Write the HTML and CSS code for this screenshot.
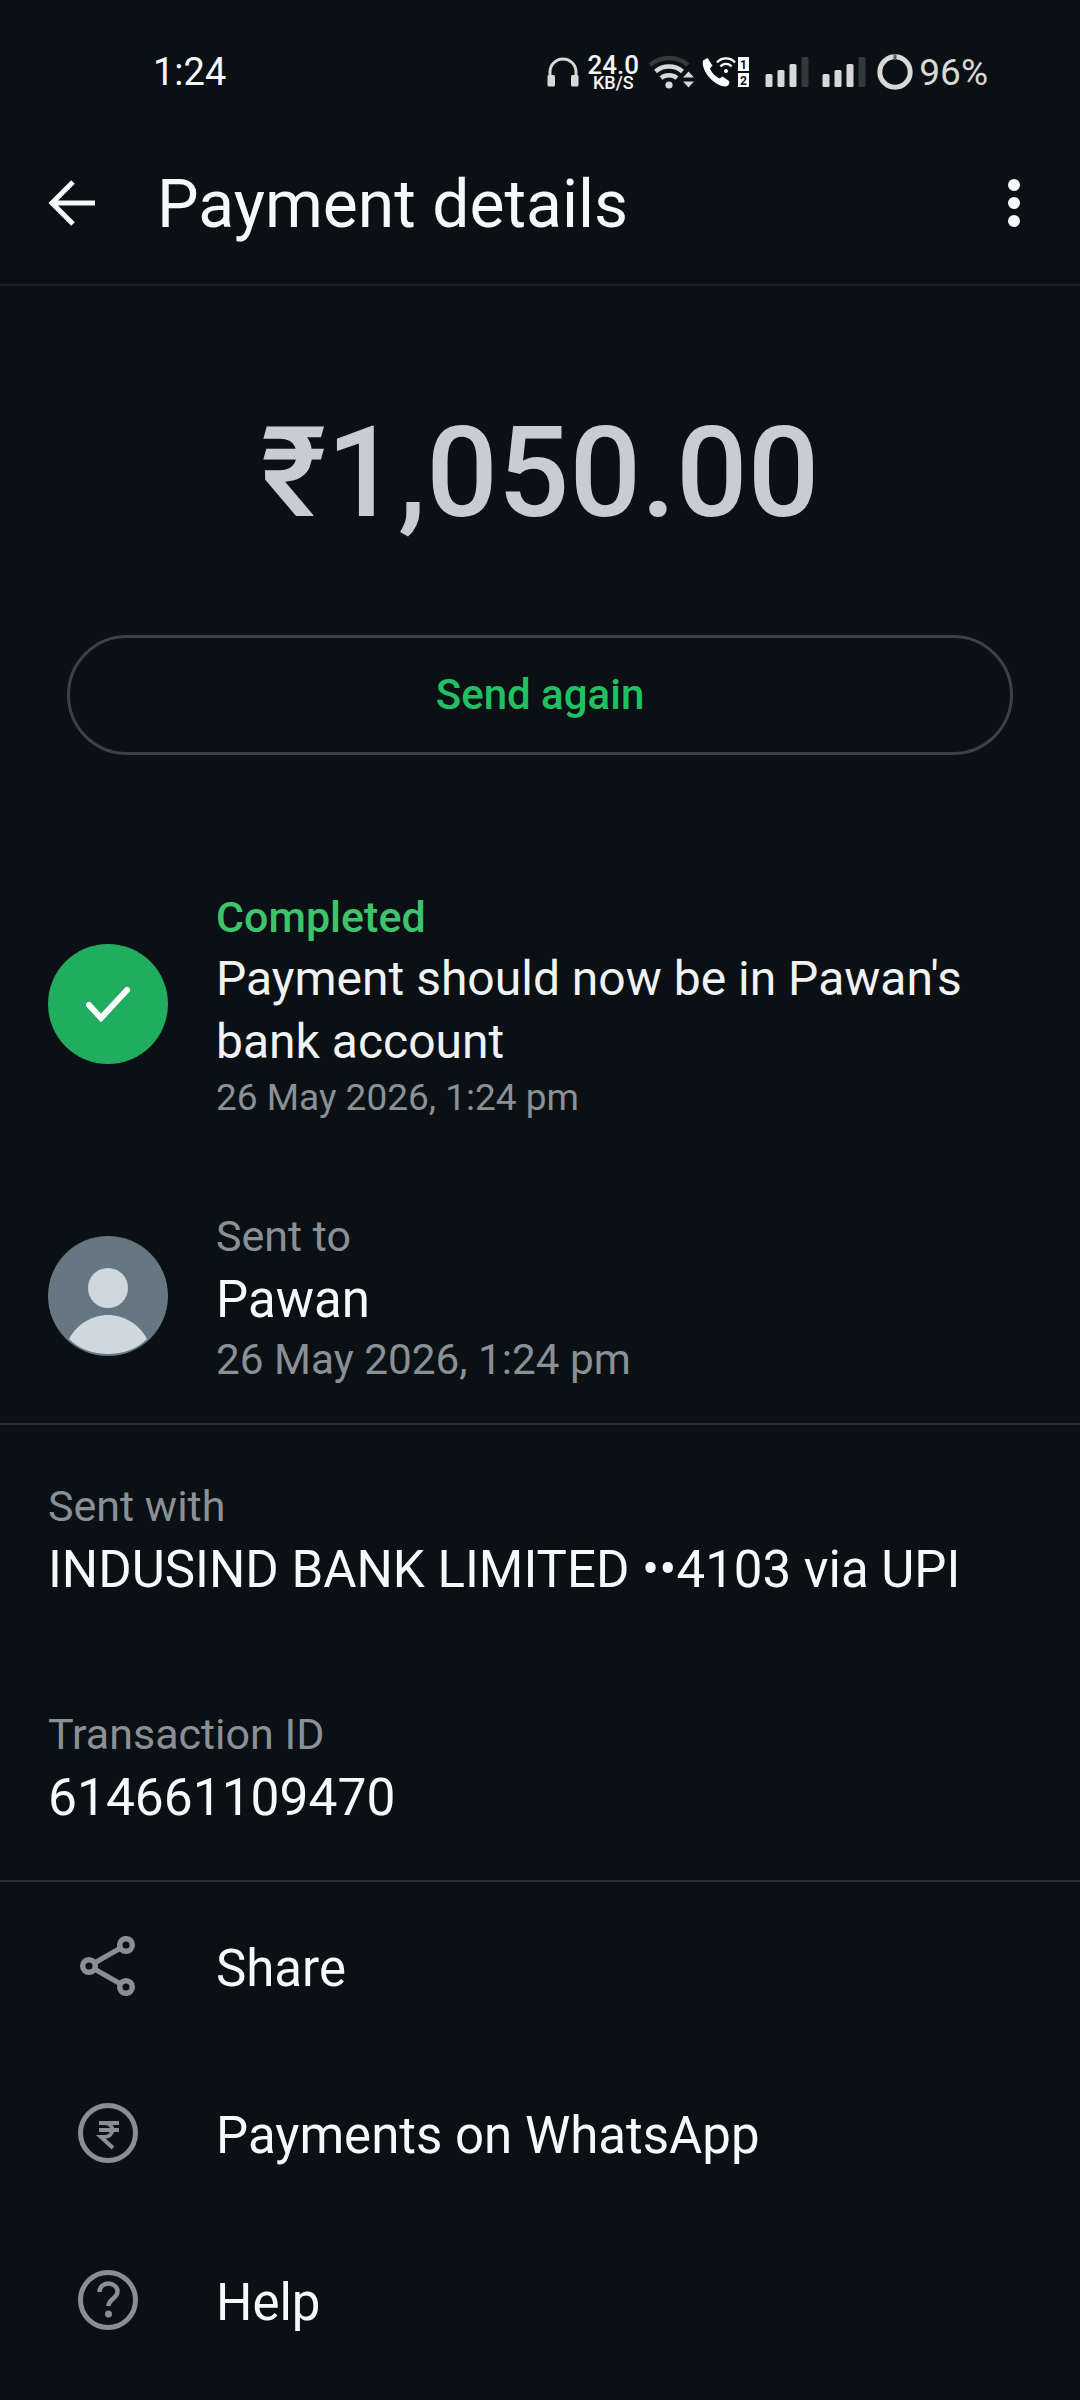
FILE: index.html
```html
<!DOCTYPE html>
<html lang="en">
<head>
  <meta charset="UTF-8">
  <meta name="viewport" content="width=device-width, initial-scale=1.0">
  <title>Payment details</title>
  <link rel="stylesheet" href="styles.css">
</head>
<body>
  <div class="status-bar">
    <span class="clock">1:24</span>
    <div class="status-icons">
      <svg class="ic-headphones" width="32" height="30" viewBox="0 0 32 30"><path d="M3 22V15a13 13 0 0 1 26 0v7" fill="none" stroke="#d8d8d8" stroke-width="3"/><rect x="0.500" y="18" width="7.500" height="11.500" rx="1.500" fill="#d8d8d8"/><rect x="24" y="18" width="7.500" height="11.500" rx="1.500" fill="#d8d8d8"/></svg>
      <div class="net-speed"><span class="net-value">24.0</span><span class="net-unit">KB/S</span></div>
      <svg class="ic-wifi" width="46" height="36" viewBox="0 0 46 36">
        <path d="M2 11a29 29 0 0 1 38 0" fill="none" stroke="#33383b" stroke-width="4.500"/>
        <path d="M7.500 17.500a21 21 0 0 1 27 0" fill="none" stroke="#d8d8d8" stroke-width="4.500"/>
        <path d="M13 24a13 13 0 0 1 16 0" fill="none" stroke="#d8d8d8" stroke-width="4.500"/>
        <circle cx="21" cy="31" r="3.600" fill="#d8d8d8"/>
        <path d="M35 23.500l5.500-6 5.500 6zM35 27.500h11l-5.500 6z" fill="#d8d8d8"/>
      </svg>
      <svg class="ic-call" width="50" height="32" viewBox="0 0 50 32">
        <path d="M3 4.500l4.500-2.500 5 7.500-2.500 3c1 3 5 8 9.500 10l3-2 6.500 4.500c1 1.500 0 5-3.500 5.500C14 30 1 15 3 4.500z" fill="#fff"/>
        <path d="M17 6.500a12 12 0 0 1 18 0M20.500 10.500a7 7 0 0 1 11 0" fill="none" stroke="#fff" stroke-width="2.200"/>
        <circle cx="26" cy="15" r="2" fill="#fff"/>
        <rect x="38" y="1" width="11" height="14" fill="#fff"/>
        <rect x="38" y="17" width="11" height="14" fill="#fff"/>
        <text x="43.500" y="12.500" class="sim-num">1</text>
        <text x="43.500" y="28.500" class="sim-num">2</text>
      </svg>
      <svg class="ic-signal" width="44" height="32" viewBox="0 0 44 32"><rect x="0.500" y="18" width="7" height="13" rx="1.500" fill="#d8d8d8"/><rect x="12.500" y="14" width="7" height="17" rx="1.500" fill="#d8d8d8"/><rect x="24.500" y="8" width="7" height="23" rx="1.500" fill="#d8d8d8"/><rect x="36.500" y="1" width="7" height="30" rx="1.500" fill="#33383b"/></svg>
      <svg class="ic-signal" width="44" height="32" viewBox="0 0 44 32"><rect x="0.500" y="18" width="7" height="13" rx="1.500" fill="#d8d8d8"/><rect x="12.500" y="14" width="7" height="17" rx="1.500" fill="#d8d8d8"/><rect x="24.500" y="8" width="7" height="23" rx="1.500" fill="#d8d8d8"/><rect x="36.500" y="1" width="7" height="30" rx="1.500" fill="#33383b"/></svg>
      <svg class="ic-battery" width="36" height="36" viewBox="0 0 36 36"><circle cx="18" cy="18" r="15.200" fill="none" stroke="#d8d8d8" stroke-width="5"/><path d="M16.500 0.500h3v5h-3z" fill="#5c6164"/></svg>
      <span class="battery-text">96%</span>
    </div>
  </div>

  <div class="app-header">
    <svg class="back-icon" width="48" height="48" viewBox="0 0 48 48"><path d="M47 23H4M25 2L4 23l21 21" fill="none" stroke="#f7f8fa" stroke-width="5"/></svg>
    <h1 class="page-title">Payment details</h1>
    <div class="more-menu"><span></span><span></span><span></span></div>
  </div>

  <div class="amount-section">
    <div class="amount">₹1,050.00</div>
    <div class="send-again">Send again</div>
  </div>

  <div class="info-row info-status">
    <div class="round-icon round-green">
      <svg width="48" height="36" viewBox="0 0 48 36"><path d="M5 19l12 13L43 4" fill="none" stroke="#fff" stroke-width="6" stroke-linecap="round"/></svg>
    </div>
    <div class="info-text">
      <div class="status-label">Completed</div>
      <div class="status-line">Payment should now be in Pawan's bank account</div>
      <div class="small-date">26 May 2026, 1:24 pm</div>
    </div>
  </div>

  <div class="info-row info-sent">
    <div class="round-icon round-avatar">
      <svg width="120" height="120" viewBox="0 0 120 120"><circle cx="60" cy="52" r="20" fill="#cfd8de"/><path d="M21 103c8-15 23-24 39-24s31 9 39 24c-10 10-24 15-39 15s-29-5-39-15z" fill="#cfd8de"/></svg>
    </div>
    <div class="info-text">
      <div class="muted-label">Sent to</div>
      <div class="main-line">Pawan</div>
      <div class="muted-date">26 May 2026, 1:24 pm</div>
    </div>
  </div>

  <div class="details">
    <div class="detail-block">
      <div class="muted-label">Sent with</div>
      <div class="main-line">INDUSIND BANK LIMITED ••4103 via UPI</div>
    </div>
    <div class="detail-block">
      <div class="muted-label">Transaction ID</div>
      <div class="main-line txn-id">614661109470</div>
    </div>
  </div>

  <div class="actions">
    <div class="action-row">
      <div class="action-icon">
        <svg width="60" height="60" viewBox="0 0 60 60"><path d="M48 9L11 30l37 21" fill="none" stroke="#899094" stroke-width="5"/><circle cx="48" cy="9" r="6.300" fill="#0b1014" stroke="#899094" stroke-width="5.500"/><circle cx="11" cy="30" r="6.300" fill="#0b1014" stroke="#899094" stroke-width="5.500"/><circle cx="48" cy="51" r="6.300" fill="#0b1014" stroke="#899094" stroke-width="5.500"/></svg>
      </div>
      <span class="action-label">Share</span>
    </div>
    <div class="action-row">
      <div class="action-icon">
        <svg width="60" height="60" viewBox="0 0 60 60"><circle cx="30" cy="30" r="27.500" fill="none" stroke="#899094" stroke-width="5"/><path d="M21 20h20M21 27h20M26 20c11 0 11 14 0 14h-3l12 11" fill="none" stroke="#899094" stroke-width="4"/></svg>
      </div>
      <span class="action-label">Payments on WhatsApp</span>
    </div>
    <div class="action-row">
      <div class="action-icon">
        <svg width="60" height="60" viewBox="0 0 60 60"><circle cx="30" cy="30" r="27.500" fill="none" stroke="#899094" stroke-width="5"/><path d="M21.500 22c0-5 4-8.500 9-8.500s9 3.500 9 8c0 7-9 7.500-9 14.500" fill="none" stroke="#899094" stroke-width="4.500"/><circle cx="30.500" cy="44" r="3.500" fill="#899094"/></svg>
      </div>
      <span class="action-label">Help</span>
    </div>
  </div>
</body>
</html>
```

FILE: styles.css
```css
* {
  box-sizing: border-box;
}

body {
  margin: 0;
  background-color: #0b1014;
  color: #f7f8fa;
  font-family: Roboto, "Liberation Sans", sans-serif;
}

/* Status bar */
.status-bar {
  display: flex;
  align-items: center;
  justify-content: space-between;
  height: 144px;
  padding: 0 92px 0 153px;
}

.clock {
  font-size: 38px;
  color: #f7f8fa;
}

.status-icons {
  display: flex;
  align-items: center;
}

.ic-headphones {
  margin-right: 8px;
}

.net-speed {
  display: flex;
  flex-direction: column;
  align-items: center;
  width: 52px;
  margin-right: 9px;
  color: #f4f4f4;
  font-weight: 500;
}

.net-value {
  font-size: 26px;
  line-height: 20px;
}

.net-unit {
  font-size: 18px;
  line-height: 15px;
}

.ic-wifi {
  margin-right: 6px;
}

.ic-call {
  margin-right: 15px;
}

.sim-num {
  font-family: Roboto, sans-serif;
  font-size: 12px;
  font-weight: 700;
  text-anchor: middle;
  fill: #0b1014;
}

.ic-signal {
  margin-right: 13px;
}

.ic-battery {
  margin-left: -2px;
  margin-right: 6px;
}

.battery-text {
  font-size: 37px;
  color: #d8d8d8;
}

/* Header */
.app-header {
  display: flex;
  align-items: center;
  height: 142px;
  padding: 0 48px 20px;
  border-bottom: 2px solid #1c2125;
}

.back-icon {
  flex-shrink: 0;
  margin-right: 61px;
}

.page-title {
  flex: 1;
  margin: 0;
  font-size: 66px;
  font-weight: 400;
}

.more-menu {
  display: flex;
  flex-direction: column;
  gap: 6px;
  margin-right: 12px;
  margin-bottom: 3px;
}

.more-menu span {
  width: 12px;
  height: 12px;
  border-radius: 50%;
  background-color: #f7f8fa;
}

/* Amount */
.amount-section {
  padding: 0 67px;
}

.amount {
  margin-top: 117px;
  font-size: 126px;
  line-height: 140px;
  font-weight: 500;
  text-align: center;
  color: #c9ccd0;
}

.send-again {
  height: 120px;
  margin-top: 92px;
  border: 3px solid #3b4145;
  border-radius: 60px;
  font-size: 42px;
  font-weight: 500;
  line-height: 113px;
  text-align: center;
  color: #21c063;
}

/* Info rows */
.info-row {
  display: flex;
  align-items: center;
  padding: 0 48px;
}

.info-status {
  margin-top: 131px;
}

.info-sent {
  margin-top: 82px;
}

.round-icon {
  display: flex;
  align-items: center;
  justify-content: center;
  flex-shrink: 0;
  width: 120px;
  height: 120px;
  margin-right: 48px;
  border-radius: 50%;
}

.round-green {
  background-color: #21ad60;
  margin-bottom: 1px;
}

.round-avatar {
  background-color: #667781;
  overflow: hidden;
  margin-bottom: 4px;
}

.info-text {
  flex: 1;
}

.info-status .info-text {
  padding-top: 1px;
}

.status-label {
  font-size: 43px;
  line-height: 60px;
  font-weight: 500;
  color: #3ec46d;
}

.status-line {
  font-size: 48px;
  line-height: 63px;
  color: #f0f2f4;
}

.main-line {
  margin-top: 2px;
  font-size: 51px;
  line-height: 62px;
  color: #f7f8fa;
}

.txn-id {
  font-size: 51.500px;
}

.small-date {
  font-size: 37px;
  line-height: 50px;
  color: #8a9196;
}

.muted-label,
.muted-date {
  font-size: 43px;
  line-height: 62px;
  color: #8a9196;
}

.muted-date {
  margin-top: -2px;
  font-size: 42.300px;
}

/* Details */
.details {
  margin-top: 32px;
  padding: 0 48px;
  border-top: 2px solid #2a2f33;
  border-bottom: 2px solid #2a2f33;
}

.detail-block {
  padding: 50px 0 52px;
}

.detail-block:last-child {
  padding-bottom: 51px;
}

/* Actions */
.action-row {
  display: flex;
  align-items: center;
  height: 167px;
  padding-left: 78px;
}

.action-icon {
  display: flex;
  width: 60px;
  margin-right: 78px;
}

.action-label {
  margin-top: 6px;
  font-size: 51px;
  color: #f7f8fa;
}
```
